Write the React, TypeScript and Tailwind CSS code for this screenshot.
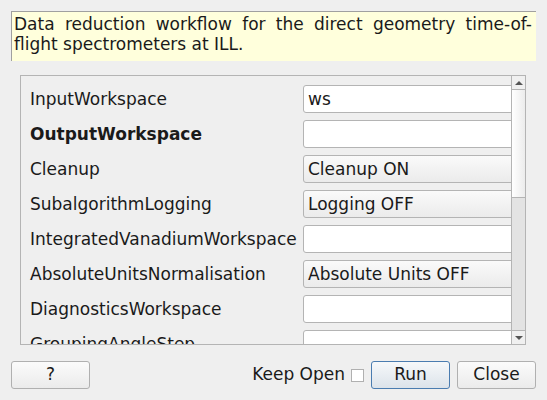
const rows: { label: string; kind: "edit" | "combo"; value?: string; bold?: boolean }[] = [
  { label: "InputWorkspace", kind: "edit", value: "ws" },
  { label: "OutputWorkspace", kind: "edit", bold: true },
  { label: "Cleanup", kind: "combo", value: "Cleanup ON" },
  { label: "SubalgorithmLogging", kind: "combo", value: "Logging OFF" },
  { label: "IntegratedVanadiumWorkspace", kind: "edit" },
  { label: "AbsoluteUnitsNormalisation", kind: "combo", value: "Absolute Units OFF" },
  { label: "DiagnosticsWorkspace", kind: "edit" },
  { label: "GroupingAngleStep", kind: "edit" },
];

function Field({ kind, value }: { kind: "edit" | "combo"; value?: string }) {
  if (kind === "combo") {
    return (
      <div className="h-[28px] w-[240px] shrink-0 rounded-[3px] border border-[#b4b4b4] bg-gradient-to-b from-[#fafafa] to-[#ebebeb] px-[4px] leading-[26px]">
        {value}
      </div>
    );
  }
  return (
    <div className="h-[28px] w-[240px] shrink-0 rounded-[3px] border border-[#b4b4b4] bg-white px-[4px] leading-[26px]">
      {value}
    </div>
  );
}

function Scrollbar() {
  return (
    <div className="flex w-[14px] shrink-0 flex-col border-l border-[#b4b4b4] bg-[#e3e3e3]">
      <div className="flex h-[14px] items-center justify-center border-b border-[#b4b4b4] bg-[#f0f0f0]">
        <div className="h-0 w-0 border-x-[4px] border-b-[4px] border-x-transparent border-b-[#555]" />
      </div>
      <div className="h-[108px] border-b border-[#b4b4b4] bg-gradient-to-r from-white to-[#ececec]" />
      <div className="flex-1" />
      <div className="flex h-[14px] items-center justify-center border-t border-[#b4b4b4] bg-[#f0f0f0]">
        <div className="h-0 w-0 border-x-[4px] border-t-[4px] border-x-transparent border-t-[#555]" />
      </div>
    </div>
  );
}

function Button({ children, primary }: { children: React.ReactNode; primary?: boolean }) {
  return (
    <div
      className={
        primary
          ? "flex h-[28px] w-[79px] items-center justify-center rounded-[3px] border border-[#4a7cb0] bg-gradient-to-b from-[#f6f8fa] to-[#dce3ea]"
          : "flex h-[28px] w-[79px] items-center justify-center rounded-[3px] border border-[#b0b0b0] bg-gradient-to-b from-[#fbfbfb] to-[#ebebeb]"
      }
    >
      {children}
    </div>
  );
}

export default function App() {
  return (
    <div
      className="flex h-[400px] w-[547px] flex-col overflow-hidden bg-[#efefef] text-[17px] text-[#1a1a1a]"
      style={{ fontFamily: '"DejaVu Sans", sans-serif' }}
    >
      <div className="mx-[11px] mt-[11px] h-[50px] border-l border-t border-[#a0a0a0] bg-[#ffffdc] pl-[2px] pr-[4px] pt-[2px] text-justify leading-[20px]">
        Data reduction workflow for the direct geometry time-of-flight spectrometers at ILL.
      </div>

      <div className="ml-[20px] mr-[21px] mt-[14px] flex h-[270px] border border-[#b4b4b4]">
        <div className="flex flex-1 flex-col gap-[7px] overflow-hidden pl-[9px] pt-[9px]">
          {rows.map((r) => (
            <div key={r.label} className="flex h-[28px] shrink-0 items-center">
              <div className={r.bold ? "w-[273px] shrink-0 pt-[1px] font-bold" : "w-[273px] shrink-0 pt-[1px]"}>
                {r.label}
              </div>
              <Field kind={r.kind} value={r.value} />
            </div>
          ))}
        </div>
        <Scrollbar />
      </div>

      <div className="mx-[11px] mt-[16px] flex items-center">
        <Button>?</Button>
        <div className="flex-1" />
        <span>Keep Open</span>
        <div className="ml-[6px] h-[13px] w-[13px] border border-[#b0b0b0] bg-white" />
        <div className="ml-[7px]">
          <Button primary>Run</Button>
        </div>
        <div className="ml-[7px]">
          <Button>Close</Button>
        </div>
      </div>
    </div>
  );
}
